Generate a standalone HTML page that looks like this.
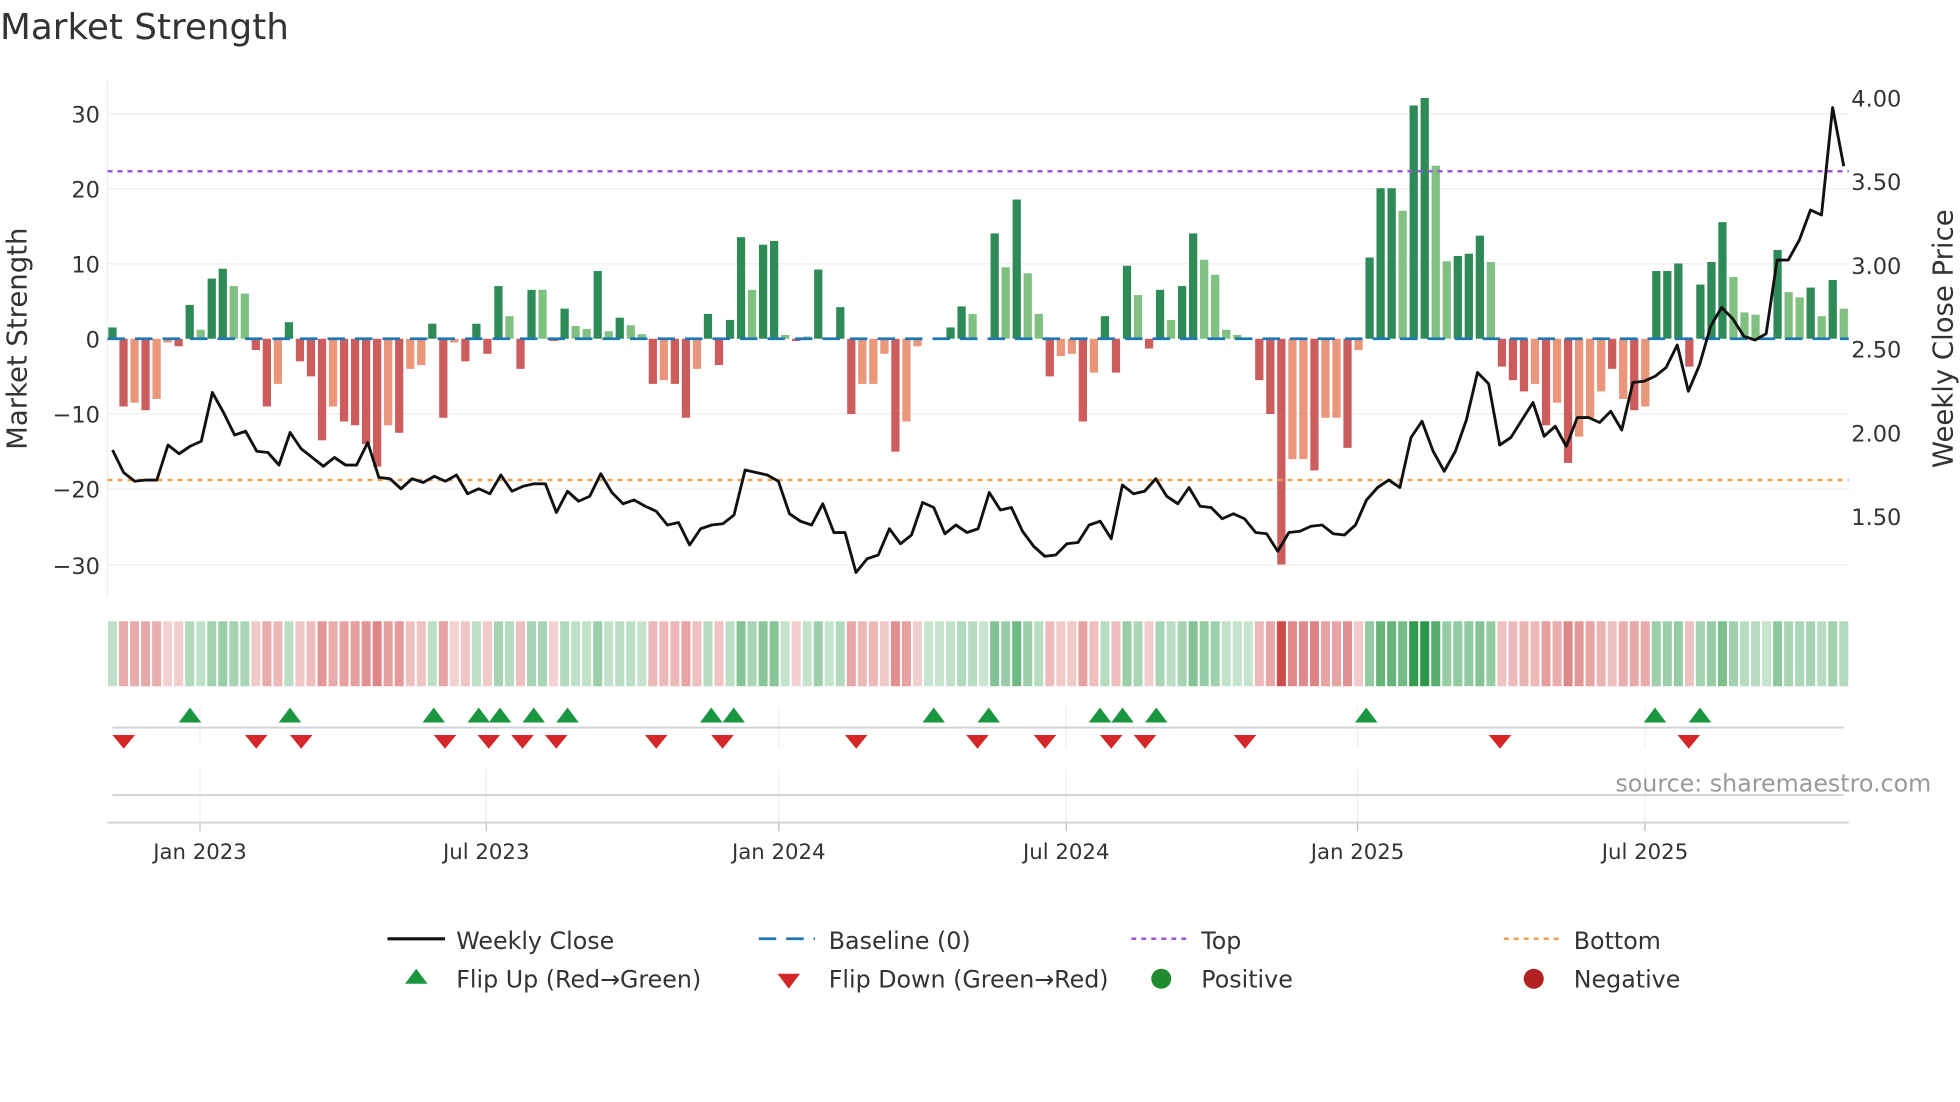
<!DOCTYPE html>
<html><head><meta charset="utf-8"><style>
html,body{margin:0;padding:0;background:#fff;}
svg{display:block;font-family:"DejaVu Sans","Liberation Sans",sans-serif;}
</style></head><body>
<svg id="s" width="1960" height="1102" viewBox="0 0 1568 881.6" xmlns="http://www.w3.org/2000/svg">
<rect width="1568" height="882" fill="#fff"/>
<text x="0" y="31" font-size="28.6" fill="#333">Market Strength</text>
<!-- grid -->
<g stroke="#eef0f3" stroke-width="1.2">
<line x1="86" y1="91" x2="1479" y2="91"/><line x1="86" y1="151" x2="1479" y2="151"/>
<line x1="86" y1="211" x2="1479" y2="211"/><line x1="86" y1="331" x2="1479" y2="331"/>
<line x1="86" y1="391" x2="1479" y2="391"/><line x1="86" y1="452" x2="1479" y2="452"/>
</g>
<line x1="86" y1="65" x2="86" y2="478" stroke="#eceff2" stroke-width="1.2"/>
<g font-size="18" fill="#333" text-anchor="end">
<text x="80" y="98">30</text><text x="80" y="158">20</text><text x="80" y="218">10</text>
<text x="80" y="278">0</text><text x="80" y="338">−10</text><text x="80" y="398">−20</text><text x="80" y="459">−30</text>
</g>
<g font-size="18" fill="#333">
<text x="1481" y="85">4.00</text><text x="1481" y="152">3.50</text><text x="1481" y="219">3.00</text>
<text x="1481" y="286">2.50</text><text x="1481" y="353">2.00</text><text x="1481" y="420">1.50</text>
</g>
<text transform="translate(21,271) rotate(-90)" font-size="22" fill="#333" text-anchor="middle">Market Strength</text>
<text transform="translate(1562,271) rotate(-90)" font-size="22" fill="#333" text-anchor="middle">Weekly Close Price</text>
<g id="bars"></g>
<line x1="86" y1="271" x2="1479" y2="271" stroke="#1f77b4" stroke-width="2.2" stroke-dasharray="14,8"/>
<line x1="86" y1="137" x2="1479" y2="137" stroke="#9b59d9" stroke-width="2" stroke-dasharray="4,4"/>
<line x1="86" y1="384" x2="1479" y2="384" stroke="#f0a050" stroke-width="2" stroke-dasharray="4,4"/>
<polyline id="price" fill="none" stroke="#111" stroke-width="2.3" stroke-linejoin="round"/>
<g id="heat"></g>
<g stroke="#eceff2" stroke-width="1">
<line x1="160" y1="565" x2="160" y2="598"/><line x1="389" y1="565" x2="389" y2="598"/><line x1="623" y1="565" x2="623" y2="598"/>
<line x1="853" y1="565" x2="853" y2="598"/><line x1="1086" y1="565" x2="1086" y2="598"/><line x1="1316" y1="565" x2="1316" y2="598"/>
<line x1="160" y1="615" x2="160" y2="658"/><line x1="389" y1="615" x2="389" y2="658"/><line x1="623" y1="615" x2="623" y2="658"/>
<line x1="853" y1="615" x2="853" y2="658"/><line x1="1086" y1="615" x2="1086" y2="658"/><line x1="1316" y1="615" x2="1316" y2="658"/>
</g>
<line x1="90" y1="582" x2="1475" y2="582" stroke="#d0d3d6" stroke-width="1.5"/>
<line x1="90" y1="636" x2="1475" y2="636" stroke="#d0d3d6" stroke-width="1.5"/>
<line x1="86" y1="658" x2="1479" y2="658" stroke="#d0d3d6" stroke-width="1.5"/>
<g stroke="#bbb" stroke-width="1">
<line x1="160" y1="658" x2="160" y2="665"/><line x1="389" y1="658" x2="389" y2="665"/><line x1="623" y1="658" x2="623" y2="665"/>
<line x1="853" y1="658" x2="853" y2="665"/><line x1="1086" y1="658" x2="1086" y2="665"/><line x1="1316" y1="658" x2="1316" y2="665"/>
</g>
<g id="mk"></g>
<text x="1545" y="633" font-size="19" fill="#999" text-anchor="end">source: sharemaestro.com</text>
<g font-size="17" fill="#333" text-anchor="middle">
<text x="160" y="687">Jan 2023</text><text x="389" y="687">Jul 2023</text><text x="623" y="687">Jan 2024</text>
<text x="853" y="687">Jul 2024</text><text x="1086" y="687">Jan 2025</text><text x="1316" y="687">Jul 2025</text>
</g>
<g font-size="19" fill="#333">
<line x1="310" y1="751" x2="356" y2="751" stroke="#111" stroke-width="2.5"/>
<text x="365" y="759">Weekly Close</text>
<line x1="607" y1="751" x2="652" y2="751" stroke="#1f77b4" stroke-width="2.2" stroke-dasharray="14,8"/>
<text x="663" y="759">Baseline (0)</text>
<line x1="905" y1="751" x2="950" y2="751" stroke="#9b59d9" stroke-width="2" stroke-dasharray="4,4"/>
<text x="961" y="759">Top</text>
<line x1="1203" y1="751" x2="1248" y2="751" stroke="#f0a050" stroke-width="2" stroke-dasharray="4,4"/>
<text x="1259" y="759">Bottom</text>
<polygon points="324,787 342,787 333,775" fill="#1a9641"/>
<text x="365" y="790">Flip Up (Red→Green)</text>
<polygon points="622,779 640,779 631,791" fill="#d62728"/>
<text x="663" y="790">Flip Down (Green→Red)</text>
<circle cx="929" cy="783" r="8" fill="#1e8c2e"/>
<text x="961" y="790">Positive</text>
<circle cx="1227" cy="783" r="8" fill="#b22222"/>
<text x="1259" y="790">Negative</text>
</g>
</svg>
<script>
var data="1.5D -9R -8.5S -9.5R -8S -0.5S -1R 4.5D 1.2L 8D 9.3D 7L 6L -1.5R -9R -6S 2.2D -3R -5R -13.5R -9S -11R -11.5R -14R -17R -11.5S -12.5R -4S -3.5S 2D -10.5R -0.5S -3R 2D -2R 7D 3L -4R 6.5D 6.5L -0.3R 4D 1.7L 1.3L 9D 1L 2.8D 1.8L 0.6L -6R -5.5S -6R -10.5R -4S 3.3D -3.5R 2.5D 13.5D 6.5L 12.5D 13D 0.5L -0.3R 0.3L 9.2D 0L 4.2D -10R -6S -6S -2S -15R -11S -1S 0L 0L 1.5D 4.3D 3.3L 0L 14D 9.5L 18.5D 8.7L 3.3L -5R -2.3S -2S -11R -4.5S 3D -4.5R 9.7D 5.8L -1.3R 6.5D 2.5L 7D 14D 10.5L 8.5L 1.2L 0.5L 0L -5.5R -10R -30R -16S -16S -17.5R -10.5S -10.5S -14.5R -1.5S 10.8D 20D 20D 17L 31D 32D 23L 10.3L 11D 11.3D 13.7D 10.2L -3.7R -5.5R -7R -6S -11.5R -8.5S -16.5R -13S -10.5S -7S -4R -8S -9.5R -9S 9D 9D 10D -3.7R 7.2D 10.2D 15.5D 8.2L 3.5L 3.2L 0L 11.8D 6.2L 5.5L 6.8D 3L 7.8D 4L".split(" ");
var py="360 378 385 384 384 356 363 357 353 314 330 348 345 361 362 372 346 359 366 373 366 372 372 354 382 383 391 383 386 381 385 380 395 391 395 380 393 389 387 387 410 393 401 397 379 394 403 400 405 409 420 418 436 423 420 419 412 376 378 380 385 411 417 420 403 426 426 458 447 444 423 435 428 402 406 427 420 426 423 394 408 406 425 437 445 444 435 434 420 417 431 388 395 393 383 397 403 390 405 406 415 411 415 426 427 441 426 425 421 420 427 428 420 400 390 384 390 350 337 361 377 361 336 298 307 356 350 336 322 349 341 357 334 334 338 329 344 306 305 301 294 276 313 292 261 246 255 269 272 267 208 208 192 168 172 86 133".split(" ");
var NS="http://www.w3.org/2000/svg";
function el(p,t,a){var e=document.createElementNS(NS,t);for(var k in a)e.setAttribute(k,a[k]);document.getElementById(p).appendChild(e);return e;}
var n=data.length, x0=90, step=(1475-90)/(n-1);
var col={D:"#2e8b57",L:"#80c080",R:"#cd5c5c",S:"#e9967a"};
var pts=[];
for(var i=0;i<n;i++){
 var v=parseFloat(data[i]),c=data[i].slice(-1),x=x0+i*step;
 var y=271-v*6.02;
 if(Math.abs(v)>0.05) el("bars","rect",{x:x-3.3,y:Math.min(y,271),width:6.6,height:Math.abs(v*6.02),fill:col[c]});
 var t=Math.min(Math.abs(v)/32,1), a=0.26+0.72*t;
 var f=v>=0?"rgba(40,150,70,"+a+")":"rgba(205,70,70,"+(0.24+0.78*t)+")";
 el("heat","rect",{x:x-step/2+0.8,y:497,width:step-1.6,height:52,fill:f});
}
var m=py.length, pstep=(1475-90)/(m-1);
for(var j=0;j<m;j++){pts.push((90+j*pstep).toFixed(1)+","+py[j]);}
document.getElementById("price").setAttribute("points",pts.join(" "));
var up=[152,232,347,383,400,427,454,569,587,747,791,880,898,925,1093,1324,1360];
var dn=[99,205,241,356,391,418,445,525,578,685,782,836,889,916,996,1200,1351];
up.forEach(function(x){el("mk","polygon",{points:(x-9)+",578 "+(x+9)+",578 "+x+",566",fill:"#1a9641"});});
dn.forEach(function(x){el("mk","polygon",{points:(x-9)+",588 "+(x+9)+",588 "+x+",599",fill:"#d62728"});});
</script>
</body></html>
